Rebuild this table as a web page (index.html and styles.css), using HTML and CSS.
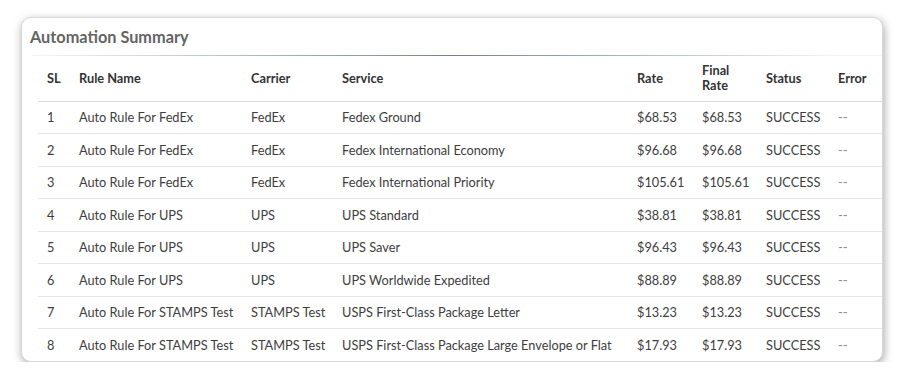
FILE: index.html
```html
<!DOCTYPE html>
<html lang="en">
<head>
    <meta charset="UTF-8">
    <meta name="viewport" content="width=device-width, initial-scale=1.0">
    <title>Automation Summary</title>
    <link rel="stylesheet" href="styles.css">
</head>
<body>
    <div class="card">
        <h2 class="card-title">Automation Summary</h2>
        <div class="title-rule"></div>

        <table class="summary-table">
            <colgroup>
                <col style="width: 32px">
                <col style="width: 172px">
                <col style="width: 91px">
                <col style="width: 295px">
                <col style="width: 65px">
                <col style="width: 64px">
                <col style="width: 72px">
                <col style="width: 53px">
            </colgroup>
            <thead>
                <tr>
                    <th>SL</th>
                    <th>Rule Name</th>
                    <th>Carrier</th>
                    <th>Service</th>
                    <th>Rate</th>
                    <th>Final<br>Rate</th>
                    <th>Status</th>
                    <th>Error</th>
                </tr>
            </thead>
            <tbody>
                <tr><td>1</td><td>Auto Rule For FedEx</td><td>FedEx</td><td>Fedex Ground</td><td>$68.53</td><td>$68.53</td><td>SUCCESS</td><td class="muted">--</td></tr>
                <tr><td>2</td><td>Auto Rule For FedEx</td><td>FedEx</td><td>Fedex International Economy</td><td>$96.68</td><td>$96.68</td><td>SUCCESS</td><td class="muted">--</td></tr>
                <tr><td>3</td><td>Auto Rule For FedEx</td><td>FedEx</td><td>Fedex International Priority</td><td>$105.61</td><td>$105.61</td><td>SUCCESS</td><td class="muted">--</td></tr>
                <tr><td>4</td><td>Auto Rule For UPS</td><td>UPS</td><td>UPS Standard</td><td>$38.81</td><td>$38.81</td><td>SUCCESS</td><td class="muted">--</td></tr>
                <tr><td>5</td><td>Auto Rule For UPS</td><td>UPS</td><td>UPS Saver</td><td>$96.43</td><td>$96.43</td><td>SUCCESS</td><td class="muted">--</td></tr>
                <tr><td>6</td><td>Auto Rule For UPS</td><td>UPS</td><td>UPS Worldwide Expedited</td><td>$88.89</td><td>$88.89</td><td>SUCCESS</td><td class="muted">--</td></tr>
                <tr><td>7</td><td>Auto Rule For STAMPS Test</td><td>STAMPS Test</td><td>USPS First-Class Package Letter</td><td>$13.23</td><td>$13.23</td><td>SUCCESS</td><td class="muted">--</td></tr>
                <tr><td>8</td><td>Auto Rule For STAMPS Test</td><td>STAMPS Test</td><td>USPS First-Class Package Large Envelope or Flat</td><td>$17.93</td><td>$17.93</td><td>SUCCESS</td><td class="muted">--</td></tr>
            </tbody>
        </table>
    </div>
</body>
</html>
```

FILE: styles.css
```css
* {
    margin: 0;
    padding: 0;
    box-sizing: border-box;
    font-family: Lato, 'Open Sans', sans-serif;
}

body {
    background-color: #ffffff;
    color: #3a3a3a;
    padding: 17px 0 0 21px;
}

.card {
    width: 862px;
    height: 345px;
    background: white;
    border: 1px solid #d8d8d8;
    border-radius: 10px;
    box-shadow: 1px 3px 10px rgba(0, 0, 0, 0.35);
    overflow: hidden;
}

.card-title {
    font-size: 16.3px;
    font-weight: bold;
    line-height: 20px;
    color: #646464;
    padding: 9px 0 0 8px;
    margin-bottom: 8px;
}

.title-rule {
    height: 1px;
    margin-left: 10px;
    background: linear-gradient(to right, #f4f4f4 0%, #c9d5e2 15%, #5a84b0 50%, #a9bed3 72%, #f4f4f4 95%);
}

.summary-table {
    margin-left: 16px;
    border-collapse: collapse;
    table-layout: fixed;
    width: 844px;
    font-size: 12.75px;
}

.summary-table th {
    height: 45px;
    text-align: left;
    font-weight: bold;
    color: #333333;
    padding: 0 9px;
    line-height: 15px;
    border-bottom: 1px solid #dcdcdc;
}

.summary-table td {
    height: 32.5px;
    padding: 0 9px;
    white-space: nowrap;
    color: #3d3d3d;
    border-top: 1px solid #e6e6e6;
}

.summary-table td.muted {
    color: #8a8a8a;
}
```
